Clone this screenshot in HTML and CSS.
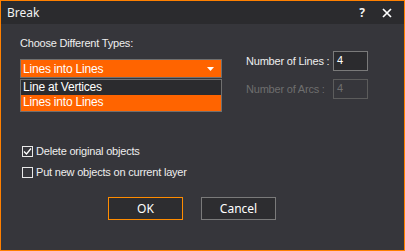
FILE: index.html
```html
<!DOCTYPE html>
<html>
<head>
<meta charset="utf-8">
<link rel="stylesheet" href="styles.css">
</head>
<body>
<div class="window">
  <div class="titlebar">
    <span class="title">Break</span>
    <span class="help">?</span>
    <svg class="close" width="10" height="10" viewBox="0 0 10 10"><path d="M1 1 L9 9 M9 1 L1 9" stroke="#fff" stroke-width="1.7" fill="none"/></svg>
  </div>
  <div class="content">
    <div class="top">
      <div class="left">
        <div class="label">Choose Different Types:</div>
        <div class="select">
          <span>Lines into Lines</span>
          <svg class="arrow" width="7" height="4" viewBox="0 0 7 4"><path d="M0 0 H7 L3.5 4 Z" fill="#fff"/></svg>
          <div class="list">
            <div class="item">Line at Vertices</div>
            <div class="item sel">Lines into Lines</div>
          </div>
        </div>
      </div>
      <div class="right">
        <div class="row">
          <span class="rlabel">Number of Lines :</span>
          <span class="input">4</span>
        </div>
        <div class="row disabled">
          <span class="rlabel">Number of Arcs :</span>
          <span class="input">4</span>
        </div>
      </div>
    </div>
    <div class="checks">
      <div class="check">
        <span class="box"><svg width="9" height="9" viewBox="0 0 9 9"><path d="M1 4.5 L3.5 7 L8 1.5" stroke="#fff" stroke-width="1.3" fill="none"/></svg></span>
        <span>Delete original objects</span>
      </div>
      <div class="check">
        <span class="box"></span>
        <span>Put new objects on current layer</span>
      </div>
    </div>
    <div class="buttons">
      <div class="btn ok">OK</div>
      <div class="btn">Cancel</div>
    </div>
  </div>
</div>
</body>
</html>
```
FILE: styles.css
```css
html, body {
  margin: 0;
  padding: 0;
  background: #36363b;
}
.window {
  width: 405px;
  height: 251px;
  box-sizing: border-box;
  border: 1px solid #ff8000;
  background: #36363b;
  font-family: "Liberation Sans", Arial, sans-serif;
  font-size: 11px;
  letter-spacing: -0.2px;
  color: #eeeeee;
  overflow: hidden;
}
.titlebar {
  height: 23px;
  background: #2b2b2e;
  display: flex;
  align-items: center;
  padding-left: 6px;
  font-family: "Noto Sans", sans-serif;
  font-size: 12px;
  letter-spacing: 0;
  color: #f2f2f2;
}
.title {
  flex: 1;
}
.help {
  font-weight: bold;
  margin-right: 17px;
  font-size: 12px;
}
.close {
  margin-right: 12px;
}
.content {
  padding-left: 19px;
}
.top {
  display: flex;
  align-items: flex-start;
  margin-top: 13px;
}
.left {
  width: 202px;
}
.label {
  height: 13px;
  line-height: 13px;
  margin-bottom: 9px;
}
.select {
  position: relative;
  height: 19px;
  box-sizing: border-box;
  border: 1px solid #707070;
  background: #ff6400;
  display: flex;
  align-items: center;
  padding-left: 2px;
  color: #ffffff;
  font-size: 12px;
}
.select span {
  flex: 1;
}
.arrow {
  margin-right: 7px;
}
.list {
  position: absolute;
  left: -1px;
  top: 19px;
  width: 202px;
  box-sizing: border-box;
  border: 1px solid #707070;
  background: #2b2b2e;
}
.item {
  height: 15px;
  line-height: 15px;
  padding-left: 2px;
  color: #ffffff;
}
.item.sel {
  background: #ff6400;
  height: 16px;
}
.right {
  margin-left: 24px;
  padding-top: 14px;
  display: flex;
  flex-direction: column;
  gap: 8px;
}
.row {
  display: flex;
  align-items: center;
  height: 20px;
}
.rlabel {
  width: 87px;
}
.input {
  width: 35px;
  height: 20px;
  box-sizing: border-box;
  border: 1px solid #7a7a7a;
  background: #2b2b2e;
  padding-left: 3px;
  line-height: 17px;
  color: #ffffff;
}
.disabled .rlabel {
  color: #6e6e6e;
}
.disabled .input {
  background: transparent;
  border-color: #5c5c5c;
  color: #6e6e6e;
}
.checks {
  margin-top: 45px;
  display: flex;
  flex-direction: column;
  gap: 7px;
}
.check {
  display: flex;
  align-items: center;
  height: 14px;
}
.box {
  width: 11px;
  height: 11px;
  box-sizing: border-box;
  border: 1px solid #e8e8e8;
  margin-left: 2px;
  margin-right: 3px;
  display: flex;
  align-items: center;
  justify-content: center;
}
.buttons {
  margin-top: 18px;
  padding-left: 88px;
  display: flex;
  gap: 18px;
}
.btn {
  width: 75px;
  height: 23px;
  box-sizing: border-box;
  border: 1px solid #7a7a7a;
  background: #2d2d30;
  display: flex;
  align-items: center;
  justify-content: center;
  font-family: "Noto Sans", sans-serif;
  font-size: 12px;
  letter-spacing: 0;
  color: #ffffff;
}
.btn.ok {
  border-color: #ff8c00;
}
```
